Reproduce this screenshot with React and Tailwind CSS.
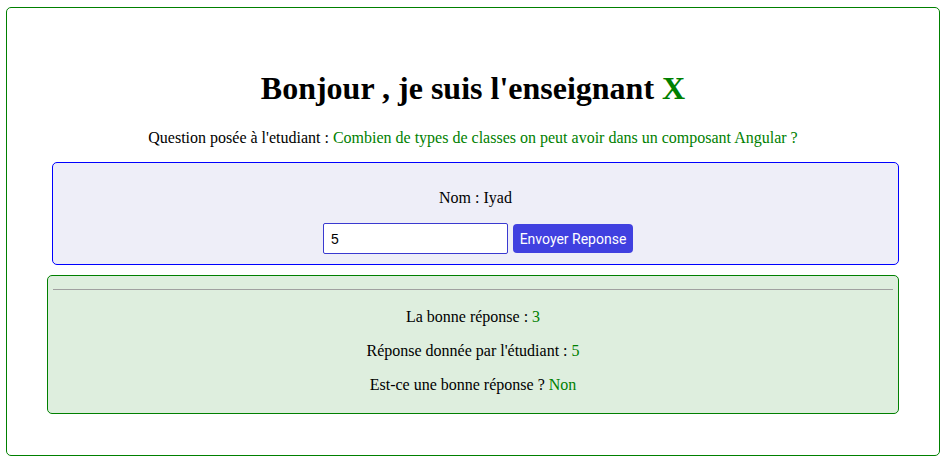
export default function App() {
  const serif = { fontFamily: '"Liberation Serif", "Times New Roman", serif' };
  return (
    <div className="w-[943px] h-[462px] bg-white overflow-hidden pt-[7px] pl-[6px]" style={serif}>
      <div className="w-[934px] h-[449px] border border-[#008000] rounded-[5px] flex flex-col items-start text-black">
        <h1 className="self-stretch text-center text-[32px] leading-[37px] font-bold mt-[62px]">
          Bonjour , je suis l'enseignant <span className="text-[#008000]">X</span>
        </h1>
        <p className="self-stretch text-center text-[16px] leading-[18px] mt-[22px]">
          Question posée à l'etudiant : <span className="text-[#008000]">Combien de types de classes on peut avoir dans un composant Angular ?</span>
        </p>
        <div className="mt-[15px] ml-[45px] w-[847px] h-[103px] border border-[#0000ff] rounded-[5px] bg-[#eeeef8] flex flex-col items-center pt-[26px]">
          <p className="text-[16px] leading-[18px]">Nom : Iyad</p>
          <div className="flex items-center gap-[5px] mt-[16px] pl-[5px]">
            <input
              defaultValue="5"
              className="w-[185px] h-[31px] bg-white border border-[#3a3ad0] rounded-[2px] px-[7px] text-[14px] text-black outline-none"
              style={{ fontFamily: '"Liberation Sans", Arial, sans-serif' }}
            />
            <button
              className="w-[120px] h-[29px] rounded-[4px] bg-[#4040e0] text-white text-[14px] leading-[16px] font-normal whitespace-nowrap"
              style={{ fontFamily: 'Roboto, "Liberation Sans", Arial, sans-serif' }}
            >
              Envoyer Reponse
            </button>
          </div>
        </div>
        <div className="mt-[10px] ml-[40px] w-[852px] h-[139px] border border-[#008000] rounded-[5px] bg-[#deeede] flex flex-col items-center px-[5px]">
          <div className="self-stretch mt-[13px] border-t border-[#a0a0a0]" />
          <p className="text-[16px] leading-[18px] mt-[18px]">
            La bonne réponse : <span className="text-[#008000]">3</span>
          </p>
          <p className="text-[16px] leading-[18px] mt-[16px]">
            Réponse donnée par l'étudiant : <span className="text-[#008000]">5</span>
          </p>
          <p className="text-[16px] leading-[18px] mt-[16px]">
            Est-ce une bonne réponse ? <span className="text-[#008000]">Non</span>
          </p>
        </div>
      </div>
    </div>
  );
}
